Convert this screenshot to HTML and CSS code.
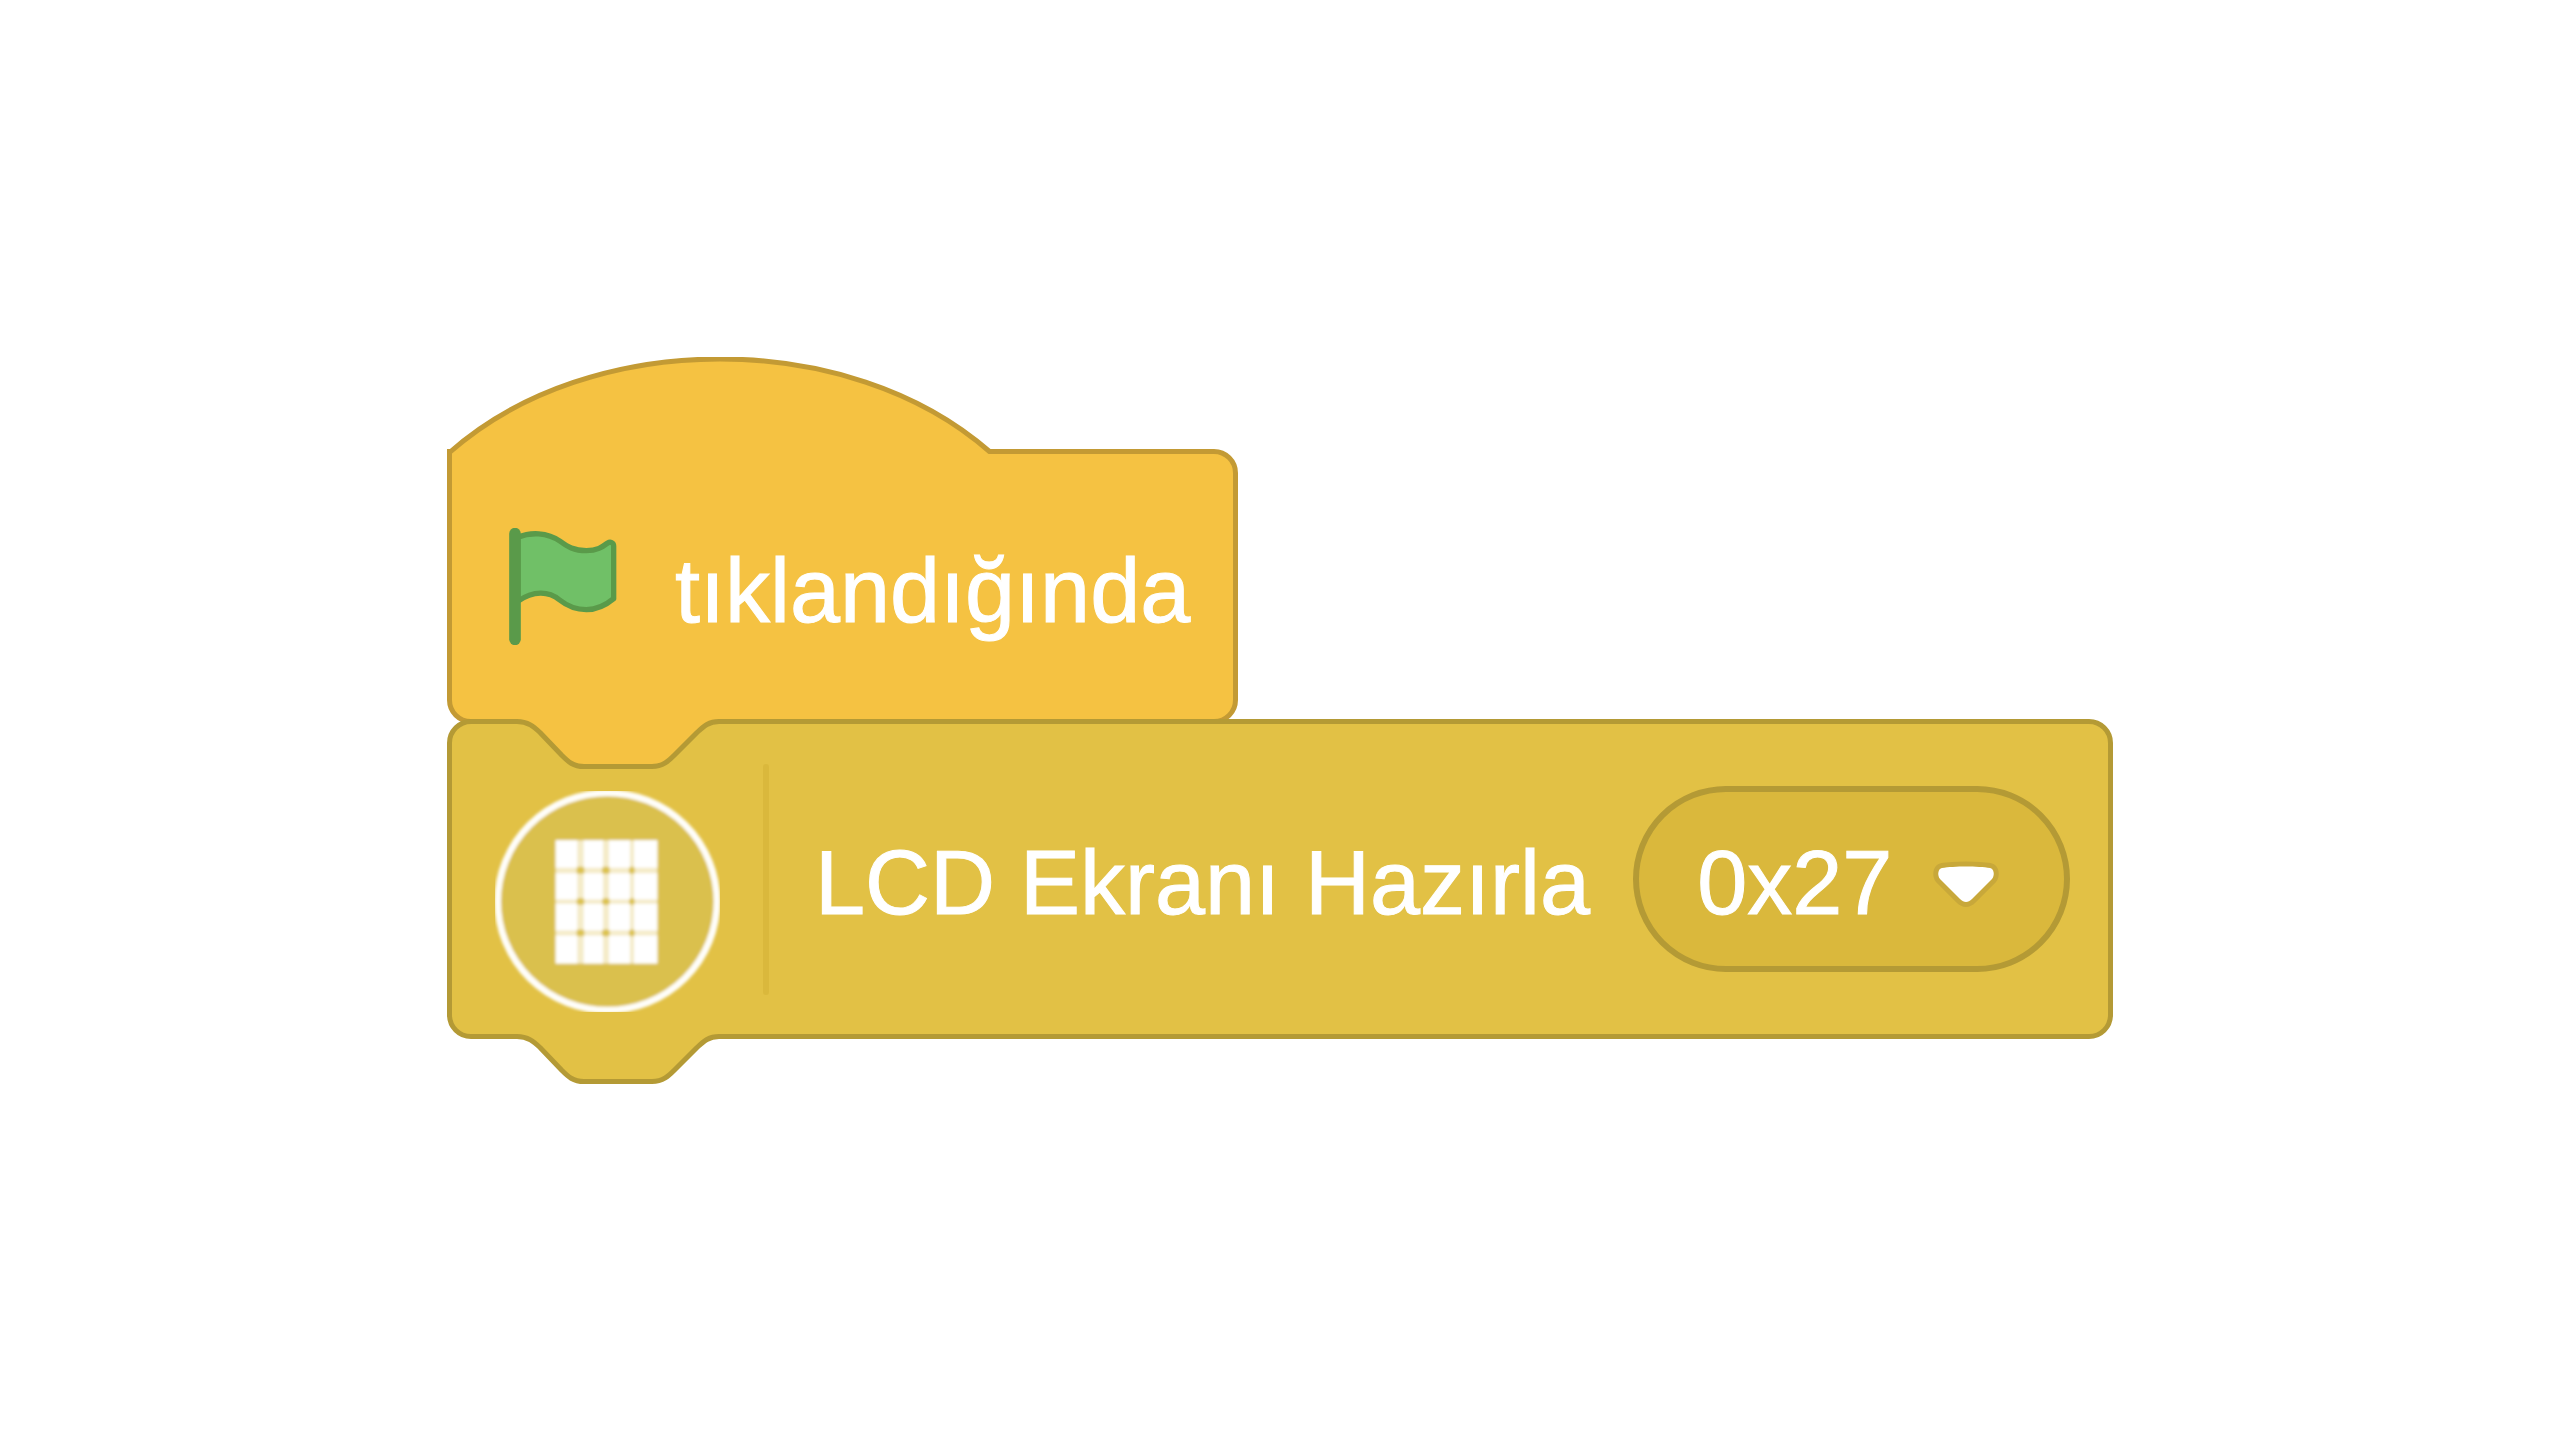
FILE: index.html
```html
<!DOCTYPE html>
<html lang="tr">
<head>
<meta charset="utf-8">
<title>LCD Ekranı Hazırla</title>
<link rel="stylesheet" href="styles.css">
</head>
<body>
<main class="workspace">
  <div class="stack">
    <section class="block block-event">
      <svg class="hat" width="560" height="100" viewBox="0 0 560 100" aria-hidden="true">
        <path class="event-fill" d="M2.5 95.5C143 -29 402 -29 542.5 94.5V98H2.5Z"/>
        <path class="event-line" d="M2.5 100V95.5C143 -29 402 -29 542.5 94.5H546"/>
      </svg>
      <svg class="flag" width="108" height="117" viewBox="86 81 324 351" aria-hidden="true">
        <path class="flag-cloth" d="M112 109C150 93 200 93 240 121C262 137 280 149 318 149C350 149 366 138 382 126C390 121 400 125 400 135V293C382 308 350 326 318 326C285 326 262 316 238 297C205 270 160 268 112 301Z"/>
        <path class="flag-pole" d="M104 98V415"/>
      </svg>
      <span class="label">tıklandığında</span>
    </section>
    <section class="block block-lcd">
      <svg class="notch notch-top" width="280" height="50" viewBox="0 0 280 50" aria-hidden="true">
        <path class="event-fill" d="M70 0V2.5C81 2.5 87 8 93 13.5L115 36.5C121 42.5 126 47.5 137 47.5H205C216 47.5 222 41.5 227 36.5L250 13.5C256 8 261 2.5 272 2.5V0Z"/>
        <path class="lcd-line" d="M70 2.5C81 2.5 87 8 93 13.5L115 36.5C121 42.5 126 47.5 137 47.5H205C216 47.5 222 41.5 227 36.5L250 13.5C256 8 261 2.5 272 2.5"/>
      </svg>
      <svg class="extension-icon" width="225" height="221" viewBox="45 33 675 662" aria-hidden="true">
        <defs><filter id="soft" x="-10%" y="-10%" width="120%" height="120%"><feGaussianBlur stdDeviation="5"/></filter></defs>
        <g filter="url(#soft)">
          <ellipse cx="382" cy="364" rx="329" ry="326" fill="#dac04e" stroke="#fffefa" stroke-width="20"/>
          <path fill="#f4ebc8" d="M227 180H532V550H227Z"/>
          <path fill="#dcc250" d="M290 260h23v21h-23zM366 260h23v21h-23zM447 260h17v21h-17zM290 354h23v20h-23zM366 354h23v20h-23zM447 354h17v20h-17zM290 448h23v20h-23zM366 448h23v20h-23zM447 448h17v20h-17z"/>
          <path fill="#fff" d="M227 180h65v83h-65zM311 180h58v83h-58zM387 180h63v83h-63zM462 180h70v83h-70zM227 279h65v79h-65zM311 279h58v79h-58zM387 279h63v79h-63zM462 279h70v79h-70zM227 371h65v80h-65zM311 371h58v80h-58zM387 371h63v80h-63zM462 371h70v80h-70zM227 466h65v84h-65zM311 466h58v84h-58zM387 466h63v84h-63zM462 466h70v84h-70z"/>
        </g>
      </svg>
      <span class="divider"></span>
      <label class="label" for="address">LCD Ekranı Hazırla</label>
      <span class="dropdown">
        <select id="address" class="dropdown-field">
          <option>0x27</option>
        </select>
        <svg class="dropdown-arrow" width="68" height="48" viewBox="0 0 68 48" aria-hidden="true">
          <path d="M10 7C22 5 46 5 58 7C62 8 63 14 60 18L40 38C36 42 32 42 28 38L8 18C5 14 6 8 10 7Z"/>
        </svg>
      </span>
      <svg class="notch notch-bottom" width="280" height="50" viewBox="0 0 280 50" aria-hidden="true">
        <path class="lcd-fill" d="M70 0V2.5C81 2.5 87 8 93 13.5L115 36.5C121 42.5 126 47.5 137 47.5H205C216 47.5 222 41.5 227 36.5L250 13.5C256 8 261 2.5 272 2.5V0Z"/>
        <path class="lcd-line" d="M70 2.5C81 2.5 87 8 93 13.5L115 36.5C121 42.5 126 47.5 137 47.5H205C216 47.5 222 41.5 227 36.5L250 13.5C256 8 261 2.5 272 2.5"/>
      </svg>
    </section>
  </div>
</main>
</body>
</html>
```
FILE: styles.css
```css
* {
  box-sizing: border-box;
}

body {
  margin: 0;
  background: #fff;
  color: #fff;
  font-family: "Liberation Sans", Arial, sans-serif;
  font-size: 90px;
  line-height: 104px;
  -webkit-text-stroke: 1px #fff;
}

.workspace {
  display: flex;
  align-items: center;
  justify-content: center;
  min-height: 100vh;
}

/* room above for the hat curve and below for the connector */
.stack {
  display: flex;
  flex-direction: column;
  align-items: flex-start;
  padding: 93px 0 45px;
}

.block {
  position: relative;
  display: flex;
  align-items: center;
  border: 5px solid;
  border-radius: 24px;
  white-space: nowrap;
}

.block-event {
  gap: 58px;
  min-height: 275px;
  margin-bottom: -5px;
  padding: 0 43px 0 57px;
  border-color: #c39a34;
  border-top-left-radius: 0;
  background: #f5c242;
}

.block-lcd {
  gap: 43px;
  min-height: 320px;
  padding: 0 38px 0 43px;
  border-color: #b49a35;
  background: #e2c145;
}

.label {
  padding-top: 8px;
}

.hat,
.notch {
  position: absolute;
  left: -5px;
}

.hat {
  top: -97px;
}

.notch-top {
  top: -5px;
}

.notch-bottom {
  bottom: -50px;
}

.event-fill {
  fill: #f5c242;
}

.lcd-fill {
  fill: #e2c145;
}

.event-line,
.lcd-line {
  fill: none;
  stroke-width: 5;
  stroke-linejoin: round;
}

.event-line {
  stroke: #c39a34;
}

.lcd-line {
  stroke: #b49a35;
}

.flag-cloth {
  fill: #70c067;
  stroke: #5a9a4a;
  stroke-width: 16;
  stroke-linejoin: round;
}

.flag-pole {
  stroke: #5a9a4a;
  stroke-width: 35;
  stroke-linecap: round;
}

.extension-icon {
  margin-top: 44px;
}

.divider {
  width: 6px;
  height: 231px;
  margin-right: 3px;
  border-radius: 3px;
  background: #dab83c;
}

.dropdown {
  position: relative;
  display: flex;
}

.dropdown-field {
  appearance: none;
  width: 437px;
  height: 186px;
  margin: 0;
  padding: 8px 120px 0 58px;
  border: 6px solid #b49a35;
  border-radius: 93px;
  background: #dab83c;
  color: inherit;
  font: inherit;
}

.dropdown-arrow {
  position: absolute;
  top: 75px;
  right: 70px;
  pointer-events: none;
}

.dropdown-arrow path {
  fill: #fff;
  stroke: #c8a83a;
  stroke-width: 10;
  stroke-linejoin: round;
  paint-order: stroke;
}
```
